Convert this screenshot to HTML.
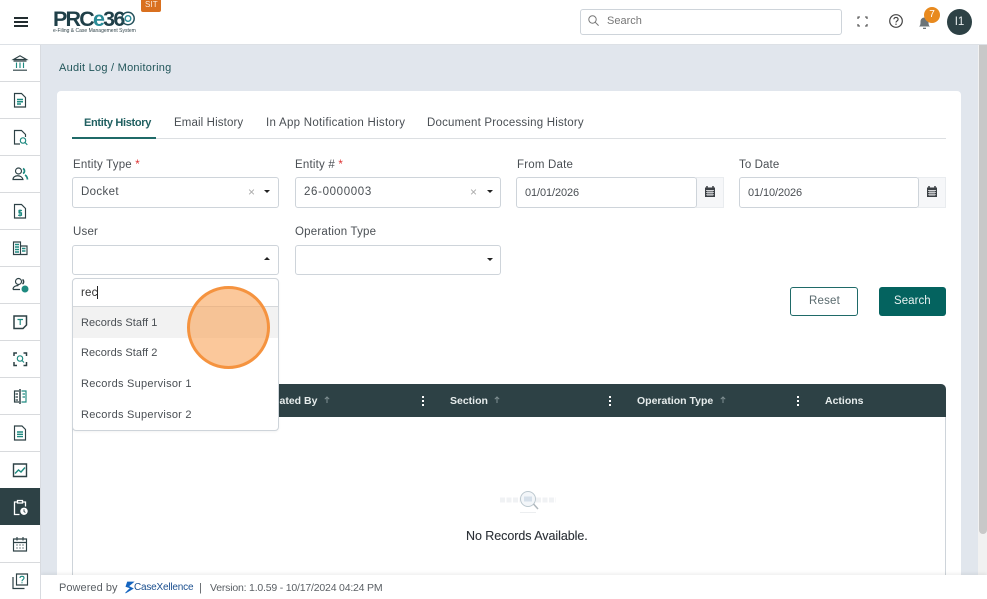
<!DOCTYPE html>
<html><head><meta charset="utf-8"><style>
html,body{margin:0;padding:0;width:987px;height:599px;overflow:hidden;background:#e1e6ed;font-family:"Liberation Sans",sans-serif;color:#444}
.a{position:absolute}
.t{position:absolute;white-space:nowrap;font-size:11.5px;line-height:14px;letter-spacing:.2px;color:#4a4f54}
.box{position:absolute;box-sizing:border-box;background:#fff;border:1px solid #ced4da;border-radius:3px}
.dv{position:absolute;left:0;width:40px;height:1px;background:#d8dadd}
.ic{position:absolute;left:10px;width:20px;height:20px;fill:none;stroke:#2d4145;stroke-width:1.15}
.ic .g{stroke:#1e8a80}
.car{position:absolute;width:0;height:0;border-left:3px solid transparent;border-right:3px solid transparent;border-top:3px solid #222}
.x{position:absolute;font-size:12px;line-height:12px;color:#aaa}
.w{color:#e6ecec;font-weight:bold;font-size:10.5px;letter-spacing:0}
.arr{position:absolute;width:8px;height:8px}
.dots{position:absolute;width:2px;height:2px;background:#fff;box-shadow:0 4px 0 #fff,0 8px 0 #fff}
</style></head><body>
<!-- main -->
<div class="a" style="left:57px;top:91px;width:904px;height:500px;background:#fff;border-radius:4px"></div>
<div class="t" style="left:59px;top:61px;color:#22565a;font-size:11px;letter-spacing:.25px">Audit Log / Monitoring</div>
<!-- tabs -->
<div class="a" style="left:72px;top:138px;width:874px;height:1px;background:#dcdfe2"></div>
<div class="a" style="left:72px;top:137px;width:84px;height:2px;background:#1f6a68"></div>
<div class="t" style="left:84px;top:116px;font-size:11px;font-weight:bold;color:#1f5f60;letter-spacing:-.32px">Entity History</div>
<div class="t" style="left:174px;top:116px;letter-spacing:.12px">Email History</div>
<div class="t" style="left:266px;top:116px;letter-spacing:.28px">In App Notification History</div>
<div class="t" style="left:427px;top:116px;letter-spacing:.2px">Document Processing History</div>
<!-- row 1 -->
<div class="t" style="left:73px;top:158px">Entity Type <span style="color:#d33">*</span></div>
<div class="box" style="left:72px;top:177px;width:207px;height:31px"></div>
<div class="t" style="left:81px;top:185px;letter-spacing:.35px">Docket</div>
<div class="x" style="left:248px;top:186px">×</div><div class="car" style="left:264px;top:190px"></div>
<div class="t" style="left:295px;top:158px">Entity # <span style="color:#d33">*</span></div>
<div class="box" style="left:295px;top:177px;width:206px;height:31px"></div>
<div class="t" style="left:304px;top:185px;letter-spacing:.65px">26-0000003</div>
<div class="x" style="left:470px;top:186px">×</div><div class="car" style="left:487px;top:190px"></div>
<div class="t" style="left:517px;top:158px">From Date</div>
<div class="a" style="left:696px;top:177px;width:28px;height:31px;background:#f6f7f9;box-sizing:border-box;border:1px solid #e9ecef;border-left:0"></div>
<div class="box" style="left:516px;top:177px;width:181px;height:31px"></div>
<div class="t" style="left:525px;top:186px;font-size:11px;letter-spacing:-.1px">01/01/2026</div>
<svg class="a" style="left:704px;top:185px" width="12" height="13" viewBox="0 0 12 13"><path d="M1 2.500h10v9.500H1z" fill="#3a3f44"/><path d="M3 1v2M9 1v2" stroke="#3a3f44" stroke-width="1.500"/><path d="M2 5.500h8M2 7.700h8M2 9.800h8M4 5v6M6 5v6M8 5v6" stroke="#f6f7f9" stroke-width=".7"/></svg>
<div class="t" style="left:739px;top:158px;letter-spacing:.1px">To Date</div>
<div class="a" style="left:918px;top:177px;width:28px;height:31px;background:#f6f7f9;box-sizing:border-box;border:1px solid #e9ecef;border-left:0"></div>
<div class="box" style="left:739px;top:177px;width:180px;height:31px"></div>
<div class="t" style="left:748px;top:186px;font-size:11px;letter-spacing:-.1px">01/10/2026</div>
<svg class="a" style="left:926px;top:185px" width="12" height="13" viewBox="0 0 12 13"><path d="M1 2.500h10v9.500H1z" fill="#3a3f44"/><path d="M3 1v2M9 1v2" stroke="#3a3f44" stroke-width="1.500"/><path d="M2 5.500h8M2 7.700h8M2 9.800h8M4 5v6M6 5v6M8 5v6" stroke="#f6f7f9" stroke-width=".7"/></svg>
<!-- row 2 -->
<div class="t" style="left:73px;top:225px">User</div>
<div class="box" style="left:72px;top:245px;width:207px;height:30px"></div>
<div class="car" style="left:264px;top:257px;border-top:0;border-bottom:3px solid #222"></div>
<div class="t" style="left:295px;top:225px">Operation Type</div>
<div class="box" style="left:295px;top:245px;width:206px;height:30px"></div>
<div class="car" style="left:487px;top:258px"></div>
<!-- buttons -->
<div class="box" style="left:790px;top:287px;width:68px;height:29px;border-color:#1f6a68"></div>
<div class="t" style="left:809px;top:294px;color:#5a6a6e">Reset</div>
<div class="a" style="left:879px;top:287px;width:67px;height:29px;background:#04635f;border-radius:3px"></div>
<div class="t" style="left:894px;top:294px;color:#e8f2f1;letter-spacing:.05px">Search</div>
<!-- table -->
<div class="a" style="left:72px;top:384px;width:874px;height:200px;box-sizing:border-box;border:1px solid #ced4da;border-radius:5px 5px 0 0"></div>
<div class="a" style="left:72px;top:384px;width:874px;height:33px;background:#2d4145;border-radius:5px 5px 0 0"></div>
<div class="t w" style="left:262px;top:394px">Created By</div>
<svg class="arr" style="left:323px;top:396px" viewBox="0 0 8 8"><path d="M4 7V1M1.800 3.200 4 1l2.200 2.200" stroke="#7f8f92" fill="none"/></svg>
<div class="dots" style="left:422px;top:396px"></div>
<div class="t w" style="left:450px;top:394px">Section</div>
<svg class="arr" style="left:493px;top:396px" viewBox="0 0 8 8"><path d="M4 7V1M1.800 3.200 4 1l2.200 2.200" stroke="#7f8f92" fill="none"/></svg>
<div class="dots" style="left:609px;top:396px"></div>
<div class="t w" style="left:637px;top:394px">Operation Type</div>
<svg class="arr" style="left:719px;top:396px" viewBox="0 0 8 8"><path d="M4 7V1M1.800 3.200 4 1l2.200 2.200" stroke="#7f8f92" fill="none"/></svg>
<div class="dots" style="left:797px;top:396px"></div>
<div class="t w" style="left:825px;top:394px">Actions</div>
<!-- empty -->
<svg class="a" style="left:498px;top:488px" width="60" height="28" viewBox="0 0 60 28"><path d="M2 12h20M38 12h20" stroke="#f0f2f4" stroke-width="5" stroke-dasharray="5 1.500"/><circle cx="30" cy="11" r="7.500" fill="#f3f6f9" stroke="#bcc8cf" stroke-width="1"/><rect x="26" y="8.500" width="8" height="5" fill="#d6e0ea"/><path d="M35.500 16l4.500 5" stroke="#b0b8bd" stroke-width="1.500"/><path d="M22 24.500h16" stroke="#eceef0"/></svg>
<div class="t" style="left:466px;top:529px;font-size:12.5px;letter-spacing:-.05px;color:#2b3036;-webkit-text-stroke:.1px #2b3036">No Records Available.</div>
<!-- dropdown -->
<div class="box" style="left:72px;top:278px;width:207px;height:153px;border-radius:4px;box-shadow:0 1px 2px rgba(0,0,0,.05)"></div>
<div class="a" style="left:73px;top:306px;width:205px;height:1px;background:#d5d8db"></div>
<div class="a" style="left:73px;top:307px;width:205px;height:31px;background:#f2f2f2"></div>
<div class="t" style="left:81px;top:286px;color:#333">rec</div>
<div class="a" style="left:97px;top:286px;width:1px;height:13px;background:#222"></div>
<div class="t" style="left:81px;top:316px;font-size:11px;letter-spacing:.05px">Records Staff 1</div>
<div class="t" style="left:81px;top:346px;font-size:11px;letter-spacing:.05px">Records Staff 2</div>
<div class="t" style="left:81px;top:377px;font-size:11px;letter-spacing:.25px">Records Supervisor 1</div>
<div class="t" style="left:81px;top:408px;font-size:11px;letter-spacing:.25px">Records Supervisor 2</div>
<div class="a" style="left:187px;top:286px;width:83px;height:83px;box-sizing:border-box;border-radius:50%;border:3px solid #f5933f;background:rgba(249,163,88,.6)"></div>
<!-- scrollbar -->
<div class="a" style="left:978px;top:45px;width:9px;height:530px;background:#f1f1f1"></div>
<div class="a" style="left:979px;top:45px;width:8px;height:489px;background:#c8c8c8;border-radius:0 0 4px 4px"></div>
<!-- footer -->
<div class="a" style="left:41px;top:575px;width:946px;height:24px;background:#fff;box-shadow:0 -2px 3px rgba(0,0,0,.06)"></div>
<div class="t" style="left:59px;top:581px;font-size:11px;letter-spacing:.05px;color:#5a5f64">Powered by</div>
<svg class="a" style="left:124px;top:581px" width="11" height="13" viewBox="0 0 11 13"><path d="M9.500 1H3.500L2 5.500 6.500 7 1.500 12 9 7.500 4.500 5.200 9.500 1z" fill="#1565c0" stroke="#1565c0" stroke-width=".8"/></svg>
<div class="t" style="left:134px;top:581px;font-size:10px;color:#1b4f8f;letter-spacing:-.2px">CaseXellence</div>
<div class="t" style="left:199px;top:581px;font-size:11px;color:#5a5f64">|</div>
<div class="t" style="left:210px;top:581px;font-size:10.5px;letter-spacing:-.2px;color:#5a5f64">Version: 1.0.59 - 10/17/2024 04:24 PM</div>
<!-- sidebar -->
<div class="a" style="left:0;top:44px;width:40px;height:555px;background:#fff;border-right:1px solid #d8dbe0"></div>
<div class="a" style="left:0;top:488px;width:40px;height:37px;background:#2d4145"></div>
<div class="dv" style="top:81px"></div><div class="dv" style="top:118px"></div><div class="dv" style="top:155px"></div><div class="dv" style="top:192px"></div><div class="dv" style="top:229px"></div><div class="dv" style="top:266px"></div><div class="dv" style="top:303px"></div><div class="dv" style="top:340px"></div><div class="dv" style="top:377px"></div><div class="dv" style="top:414px"></div><div class="dv" style="top:451px"></div><div class="dv" style="top:562px"></div>
<svg class="ic" style="top:53px" viewBox="0 0 20 20"><path d="M3.500 6.500 10 2.800l6.500 3.700zM3.500 8h13M3 17.200h14"/><path class="g" d="M6.500 9.500v5.500M10 9.500v5.500M13.500 9.500v5.500"/></svg>
<svg class="ic" style="top:90px" viewBox="0 0 20 20"><path d="M4.500 3.500h7l4 4v9.500h-11z"/><path class="g" d="M7 9.500h6M7 11.800h6M7 14h4" stroke-width="1.500"/></svg>
<svg class="ic" style="top:127px" viewBox="0 0 20 20"><path d="M10 17H4.500V3.500h7l4 4v2.500"/><circle class="g" cx="13" cy="13.500" r="2.700"/><path class="g" d="m15 15.500 2.300 2.300"/></svg>
<svg class="ic" style="top:164px" viewBox="0 0 20 20"><circle cx="8.500" cy="7" r="3"/><path d="M3 15.500c0-5 9-5 10 0z"/><path class="g" d="M13 4.500c2 1 2 4 0 5M15 11c1.500.8 2.300 2.300 2.500 4.500" stroke-width="1.700"/></svg>
<svg class="ic" style="top:201px" viewBox="0 0 20 20"><path d="M4.500 3.500h7l4 4v9.500h-11z"/><path class="g" d="M12 9.500H9v2.300h2.500v2.500H8M10 8.500v7"/></svg>
<svg class="ic" style="top:238px" viewBox="0 0 20 20"><path d="M3.500 16.500V4h7v12.500zM10.500 8h6.500v8.500h-6.500M3 16.500h14.500"/><path class="g" d="M5 6.500h4M5 9h4M5 11.500h4M5 14h4M12 10.500h3.500M12 13h3.500" stroke-width="1.500"/></svg>
<svg class="ic" style="top:275px" viewBox="0 0 20 20"><circle cx="8.500" cy="6.500" r="3"/><path d="M3 14.500h7M3 14.500c0-3 3-4 5.500-4"/><path d="M12.500 4.500c1.500 1 1.500 3.500 0 4.500" stroke-width="1.500"/><circle cx="15" cy="14" r="3.500" fill="#1e8a80" stroke="none"/></svg>
<svg class="ic" style="top:312px" viewBox="0 0 20 20"><path d="M4 4h12.500v9l-3.500 3.500H4z" stroke-width="1.500"/><path class="g" d="M7.500 7.500h5.500M10.200 7.500v5.500"/></svg>
<svg class="ic" style="top:349px" viewBox="0 0 20 20"><path d="M7 4H4v3M13.500 4h3v3M4 13v3.500h3M16.500 13v3.500h-3" stroke-width="1.500"/><circle class="g" cx="10" cy="9.500" r="2.700"/><path class="g" d="m12 11.500 2 2"/></svg>
<svg class="ic" style="top:386px" viewBox="0 0 20 20"><path d="M9 5H4.500v11H9M5.500 8H8M5.500 11H8M5.500 14H8"/><path class="g" d="M11.500 5H16v11h-4.500M12.500 8H15M12.500 11H15"/><path d="M10 3v15" stroke-width="1.500"/></svg>
<svg class="ic" style="top:423px" viewBox="0 0 20 20"><path d="M4.500 3h7.500l3.500 3.500V17h-11z"/><path class="g" d="M7 9h6M7 11.300h6M7 13.600h6" stroke-width="1.400"/></svg>
<svg class="ic" style="top:460px" viewBox="0 0 20 20"><path d="M3.500 4h13v12.500h-13z" stroke-width="1.400"/><path class="g" d="m5 13.500 3.500-3.500 2.500 2 4-4.500" stroke-width="1.400"/></svg>
<svg class="ic" style="top:497px;stroke:#fff" viewBox="0 0 20 20"><path d="M7.500 5H4.500v12.500h5M12.500 5h3v4.500M7.500 3.500h5V6h-5z" stroke-width="1.300"/><circle cx="14" cy="14.300" r="3.700" fill="#fff" stroke="none"/><path d="M14 12.300v2.200l1.400 1" stroke="#2d4145" stroke-width=".9"/></svg>
<svg class="ic" style="top:534px" viewBox="0 0 20 20"><path d="M3.500 5h13v12h-13zM3.500 8.500h13M7 3v3.500M13 3v3.500"/><path d="M6.500 11h1M9.500 11h1M12.500 11h1M6.500 14h1M9.500 14h1M12.500 14h1" stroke-width="1.300"/></svg>
<svg class="ic" style="top:571px" viewBox="0 0 20 20"><path d="M6.500 3h11v11h-11z"/><path d="M3 6v11.500h11.500" stroke-width="1.200"/><path class="g" d="M10 7c0-2.200 4-2.200 4 0 0 1.700-2 1.500-2 3.200M12 11.300v1"/></svg>
<!-- header -->
<div class="a" style="left:0;top:0;width:987px;height:44px;background:#fff;border-bottom:1px solid #dde1e6;box-sizing:content-box"></div>
<div class="a" style="left:14px;top:17px;width:14px;height:2px;background:#222d30;box-shadow:0 4px 0 #222d30,0 8px 0 #222d30"></div>
<div class="t" style="left:53px;top:7px;font-size:21.5px;line-height:24px;font-weight:bold;letter-spacing:-1.8px;color:#1f3f48">PRC<span style="color:#2a8b97">e</span>36</div>
<svg class="a" style="left:120px;top:9px" width="16" height="18" viewBox="0 0 16 18"><circle cx="8" cy="9.500" r="6.200" fill="none" stroke="#24505a" stroke-width="1.500"/><circle cx="8" cy="9.500" r="2.800" fill="none" stroke="#2a8b97" stroke-width="1.400"/></svg>
<div class="t" style="left:53px;top:28px;font-size:5px;line-height:7px;letter-spacing:0;color:#33464c">e-Filing &amp; Case Management System</div>
<div class="a" style="left:141px;top:0;width:20px;height:12px;background:#d9701f;border-radius:0 0 2px 2px"></div>
<div class="t" style="left:145px;top:0;font-size:8px;line-height:10px;color:#fbeadb;letter-spacing:.1px">SIT</div>
<div class="box" style="left:580px;top:9px;width:262px;height:26px"></div>
<svg class="a" style="left:587px;top:14px" width="13" height="13" viewBox="0 0 13 13"><circle cx="5.500" cy="5.500" r="3.700" fill="none" stroke="#777"/><path d="m8.300 8.300 3.300 3.300" stroke="#777"/></svg>
<div class="t" style="left:607px;top:14px;font-size:11px;letter-spacing:0;color:#777">Search</div>
<svg class="a" style="left:857px;top:16px" width="11" height="11" viewBox="0 0 11 11"><path d="M1 3V1h2M8 1h2v2M1 8v2h2M8 10h2V8" fill="none" stroke="#444" stroke-width="1.100"/></svg>
<svg class="a" style="left:888px;top:13px" width="16" height="16" viewBox="0 0 16 16"><circle cx="8" cy="8" r="6.300" fill="none" stroke="#444" stroke-width="1.200"/><path d="M5.900 6.300c0-2.500 4.200-2.500 4.200 0 0 1.800-2.100 1.600-2.100 3.200" fill="none" stroke="#444" stroke-width="1.200"/><path d="M8 10.600v1.300" stroke="#444" stroke-width="1.200"/></svg>
<svg class="a" style="left:918px;top:15px" width="13" height="15" viewBox="0 0 13 15"><path d="M1 11.500c1.500-1 1.500-3 1.500-5 0-2.500 1.800-4 4-4s4 1.500 4 4c0 2 0 4 1.500 5z" fill="#6b7478"/><path d="M5 12.700h3v1.300H5z" fill="#6b7478"/></svg>
<div class="a" style="left:924px;top:7px;width:16px;height:16px;border-radius:50%;background:#e88a1f;color:#fff;font-size:10px;line-height:16px;text-align:center">7</div>
<div class="a" style="left:947px;top:9px;width:25px;height:26px;border-radius:50%;background:#2d4145;color:#e8eeee;font-size:11.5px;line-height:26px;text-align:center">I1</div>
</body></html>
